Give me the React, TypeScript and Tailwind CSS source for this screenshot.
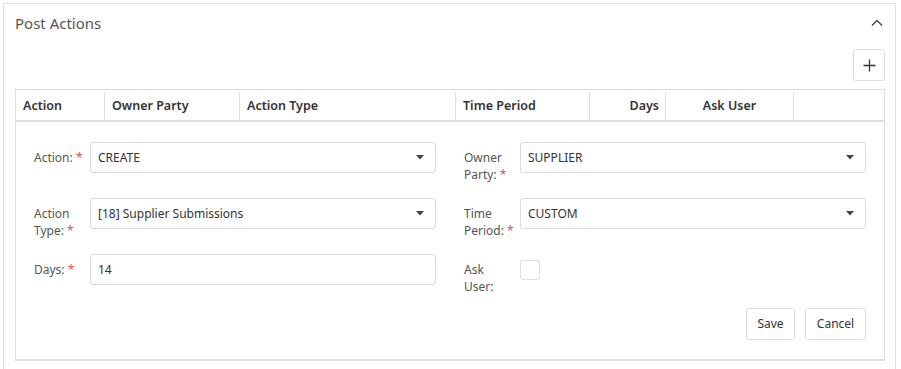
import React from "react";

const font = { fontFamily: '"Noto Sans", "Open Sans", sans-serif' };

function Caret() {
  return (
    <svg width="8" height="5" viewBox="0 0 8 5" className="shrink-0">
      <path d="M0 0 L8 0 L4 4.5 Z" fill="#444" />
    </svg>
  );
}

function Label({ a, b }: { a: string; b?: string }) {
  return (
    <div className="w-[56px] shrink-0 text-[12px] leading-[17px] text-[#555] pt-[7px]">
      {b ? (
        <>
          <div>{a}</div>
          <div>
            {b} <span className="text-[#e05050]">*</span>
          </div>
        </>
      ) : (
        <div>
          {a} <span className="text-[#e05050]">*</span>
        </div>
      )}
    </div>
  );
}

function Select({ value }: { value: string }) {
  return (
    <div className="flex-1 h-[31px] border border-[#dcdcdc] rounded-[3px] flex items-center justify-between pl-[7px] pr-[11px] text-[12px] text-[#333]">
      <span>{value}</span>
      <Caret />
    </div>
  );
}

export default function App() {
  return (
    <div className="w-[901px] h-[369px] bg-white overflow-hidden" style={font}>
      <div className="mt-[3px] ml-[3px] mr-[5px] h-[370px] border border-[#dedede] border-b-0 pl-[11px] pr-[10px]">
        <div className="flex items-center justify-between h-[38px]">
          <span className="text-[15px] text-[#555] pt-[1px]">Post Actions</span>
          <svg width="12" height="8" viewBox="0 0 12 8" className="mr-[2px]">
            <path d="M1 6.5 L6 1.5 L11 6.5" fill="none" stroke="#444" strokeWidth="1.4" />
          </svg>
        </div>
        <div className="flex justify-end mt-[7px]">
          <div className="w-[32px] h-[32px] border border-[#dcdcdc] rounded-[3px] flex items-center justify-center">
            <svg width="13" height="13" viewBox="0 0 13 13">
              <path d="M6.5 0.5 V12.5 M0.5 6.5 H12.5" stroke="#333" strokeWidth="1.3" />
            </svg>
          </div>
        </div>
        <div className="mt-[8px] border border-[#dedede] border-b-2">
          <div className="flex h-[32px] pt-[2px] text-[12.5px] font-semibold text-[#333] border-b-2 border-[#dedede]">
            <div className="w-[89px] px-[7px] flex items-center border-r border-[#dedede]">Action</div>
            <div className="w-[135px] px-[7px] flex items-center border-r border-[#dedede]">Owner Party</div>
            <div className="w-[216px] px-[7px] flex items-center border-r border-[#dedede]">Action Type</div>
            <div className="w-[134px] px-[7px] flex items-center border-r border-[#dedede]">Time Period</div>
            <div className="w-[76px] px-[6px] flex items-center justify-end border-r border-[#dedede]">Days</div>
            <div className="w-[128px] flex items-center justify-center border-r border-[#dedede]">Ask User</div>
            <div className="flex-1"></div>
          </div>
          <div className="pl-[18px] pr-[18px] pt-[20px] pb-[19px]">
            <div className="grid grid-cols-2 gap-x-[28px] gap-y-[25px]">
              <div className="flex h-[31px]">
                <Label a="Action:" />
                <Select value="CREATE" />
              </div>
              <div className="flex h-[31px]">
                <Label a="Owner" b="Party:" />
                <Select value="SUPPLIER" />
              </div>
              <div className="flex h-[31px]">
                <Label a="Action" b="Type:" />
                <Select value="[18] Supplier Submissions" />
              </div>
              <div className="flex h-[31px]">
                <Label a="Time" b="Period:" />
                <Select value="CUSTOM" />
              </div>
              <div className="flex h-[31px]">
                <Label a="Days:" />
                <div className="flex-1 h-[31px] border border-[#dcdcdc] rounded-[3px] flex items-center pl-[7px] text-[12px] text-[#333]">
                  14
                </div>
              </div>
              <div className="flex h-[31px]">
                <div className="w-[56px] shrink-0 text-[12px] leading-[17px] text-[#555] pt-[7px]">
                  <div>Ask</div>
                  <div>User:</div>
                </div>
                <div className="mt-[6px] w-[20px] h-[20px] border border-[#dcdcdc] rounded-[3px]"></div>
              </div>
            </div>
            <div className="flex justify-end gap-[10px] mt-[23px]">
              <div className="h-[32px] w-[49px] border border-[#dcdcdc] rounded-[3px] flex items-center justify-center text-[12px] text-[#333]">
                Save
              </div>
              <div className="h-[32px] w-[61px] border border-[#dcdcdc] rounded-[3px] flex items-center justify-center text-[12px] text-[#333]">
                Cancel
              </div>
            </div>
          </div>
        </div>
      </div>
    </div>
  );
}
